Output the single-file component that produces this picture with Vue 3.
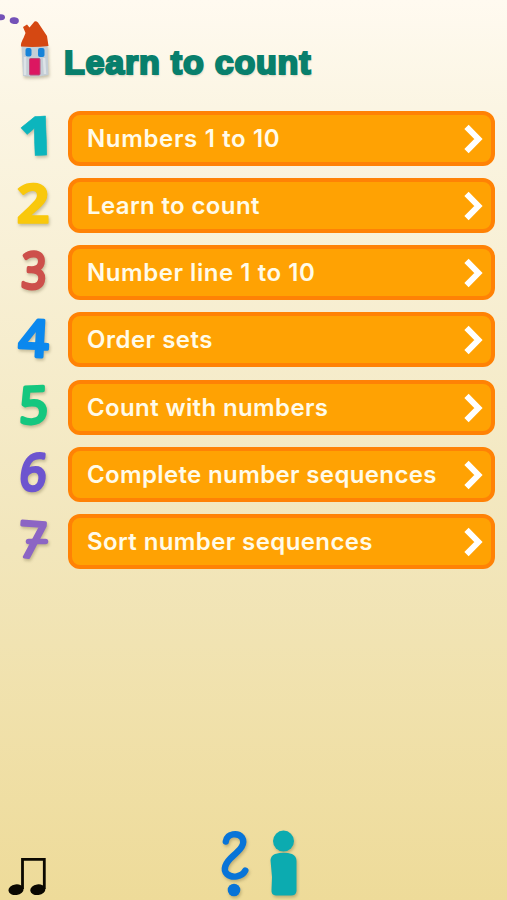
<template>
  <div class="screen">
    <header class="header">
      <svg class="house" width="64" height="90" viewBox="0 0 64 90">
        <ellipse cx="1" cy="17.3" rx="4" ry="3" fill="#7452b8" />
        <ellipse cx="14.3" cy="20.6" rx="4.6" ry="3.4" fill="#7452b8" transform="rotate(8 14 20.6)" />
        <path class="clay" d="M21.5 45 L47.5 45 L48.5 75 Q35 77.5 23 76 Z" fill="#c4ced6" />
        <path d="M25 57 L25 75 M44 58 L45 74" stroke="#dde3e7" stroke-width="2.5" />
        <path d="M21 46.5 Q20.5 43 23.5 38 L25.5 33 L23 27 L27 24.5 L29.5 27.5 L34.5 21.5 Q36 20.5 38 22.5 L47 36 L48.5 46 Q35 47.5 21 46.5 Z" fill="#d54812" />
        <rect x="25.5" y="48" width="6" height="8.5" rx="2" fill="#1683d8" />
        <rect x="38" y="48" width="6.5" height="9" rx="2" fill="#1683d8" />
        <rect x="29.5" y="58.5" width="10.5" height="16.5" rx="1" fill="#dc1761" stroke="#b94c78" />
      </svg>
      <h1 class="title">Learn to count</h1>
    </header>

    <ul class="menu">
      <li v-for="(item, index) in items" :key="index" class="menu-item">
        <svg class="number" width="68" height="55" viewBox="0 0 68 55">
          <g class="clay" :fill="item.color" :stroke="item.color">
            <text
              class="digit"
              :font-weight="item.weight"
              :stroke-width="item.stroke"
              :transform="item.transform"
            >{{ index + 1 }}</text>
            <path v-if="index === 6" d="M28.5 27.5 L45.5 27.5" stroke-width="5.5" stroke-linecap="round" />
          </g>
        </svg>
        <button class="btn">
          <span :style="{ letterSpacing: item.spacing + 'px' }">{{ item.label }}</span>
          <svg width="19" height="30" viewBox="0 0 19 30">
            <path d="M2.5 2.8 L14.4 15 L2.5 27.2" fill="none" stroke="#fff" stroke-width="6" />
          </svg>
        </button>
      </li>
    </ul>

    <footer class="footer">
      <svg class="music" width="60" height="55" viewBox="0 0 60 55">
        <ellipse cx="16" cy="44.7" rx="7.6" ry="5.3" transform="rotate(-8 16 44.7)" />
        <ellipse cx="37.8" cy="44.7" rx="7.6" ry="5.3" transform="rotate(-8 37.8 44.7)" />
        <path d="M22.5 44 V14.3 H44.3 V44" fill="none" stroke="#0b0801" stroke-width="2.8" />
      </svg>
      <svg class="help" width="100" height="80" viewBox="0 0 100 80">
        <g class="clay" fill="none" stroke="#0874d8" stroke-width="6.4" stroke-linecap="round">
          <path d="M25.8 21.5 C27 13 38 12.5 42 17.5 C46 24 40 30 33 36 C25 43 22.5 50 27 54 C32 58.5 42 57 45.3 50.5" />
          <circle cx="34" cy="70" r="6.3" fill="#0874d8" stroke="none" />
        </g>
        <g class="clay" fill="#0cabb0">
          <circle cx="83.5" cy="21.1" r="10.5" />
          <path d="M75 34 Q84 31.5 92 34 Q96.5 36 96.5 41 L96.5 71 Q96 75.5 91 75.5 L76 75.5 Q71 75 71.5 70 L72 57 L70.5 40 Q71 35.5 75 34 Z" />
        </g>
      </svg>
    </footer>
  </div>
</template>

<script setup>
// transform places the baseline centre of each digit and gives it a hand-made tilt
const items = [
  { label: 'Numbers 1 to 10', color: '#0cb5bd', weight: 800, stroke: 0.5, spacing: 0.65, transform: 'translate(37 44.5) rotate(-2) scale(1.12 1.03)' },
  { label: 'Learn to count', color: '#f9c80c', weight: 700, stroke: 1.5, spacing: 0.37, transform: 'translate(33 44.8) scale(1.1 1)' },
  { label: 'Number line 1 to 10', color: '#cd504b', weight: 500, stroke: 4, spacing: 0.55, transform: 'translate(33.5 43.3) rotate(2) scale(.82 .94)' },
  { label: 'Order sets', color: '#0b88ee', weight: 600, stroke: 3, spacing: 0.5, transform: 'translate(33 44.5) rotate(3) scale(1 .97)' },
  { label: 'Count with numbers', color: '#15c77f', weight: 500, stroke: 4, spacing: 0.37, transform: 'translate(33.5 43) rotate(-2) skewX(-3) scale(.95 .95)' },
  { label: 'Complete number sequences', color: '#6d55cf', weight: 500, stroke: 4, spacing: 0.36, transform: 'translate(31.5 42.7) skewX(-6) scale(.88 .94)' },
  { label: 'Sort number sequences', color: '#8c65c4', weight: 500, stroke: 3.5, spacing: 0.39, transform: 'translate(31.5 43.5) rotate(4) scale(.92 .94)' },
]
</script>

<style>
body {
  margin: 0;
}
</style>

<style scoped>
.screen {
  width: 507px;
  height: 900px;
  display: flex;
  flex-direction: column;
  overflow: hidden;
  background: linear-gradient(#fffaf0 0%, #fbf5e3 12%, #f2e6bb 61%, #eedb99 100%);
}

.header {
  display: flex;
  height: 110.8px;
}

.house {
  flex: none;
}

.title {
  margin: 42px 0 0;
  font: bold 34px/40px "Liberation Sans", sans-serif;
  letter-spacing: 0.8px;
  color: #087f6c;
  -webkit-text-stroke: 2.2px #087f6c;
  text-shadow: 1px 2px 2px rgba(80, 80, 50, 0.25);
  white-space: nowrap;
}

.menu {
  list-style: none;
  margin: 0;
  padding: 0;
  display: flex;
  flex-direction: column;
  gap: 12.2px;
}

.menu-item {
  display: flex;
  height: 55px;
}

.number {
  flex: none;
  overflow: visible;
}

.digit {
  font-family: "Open Sans", sans-serif;
  font-size: 53px;
  text-anchor: middle;
  stroke-linejoin: round;
}

.clay {
  filter: drop-shadow(1.5px 2px 1.5px rgba(80, 70, 30, 0.3));
}

.btn {
  box-sizing: border-box;
  width: 427px;
  height: 55px;
  padding: 1px 8px 0 15px;
  display: flex;
  align-items: center;
  justify-content: space-between;
  border: 4px solid #ff8205;
  border-radius: 12px;
  background-color: #ffa203;
  color: #fffbe9;
  font: 600 24px/30px Inter, sans-serif;
  white-space: nowrap;
  cursor: pointer;
}

.footer {
  margin-top: auto;
  display: flex;
  align-items: flex-end;
}

.music {
  fill: #0b0801;
}

.help {
  margin-left: 140px;
}
</style>
